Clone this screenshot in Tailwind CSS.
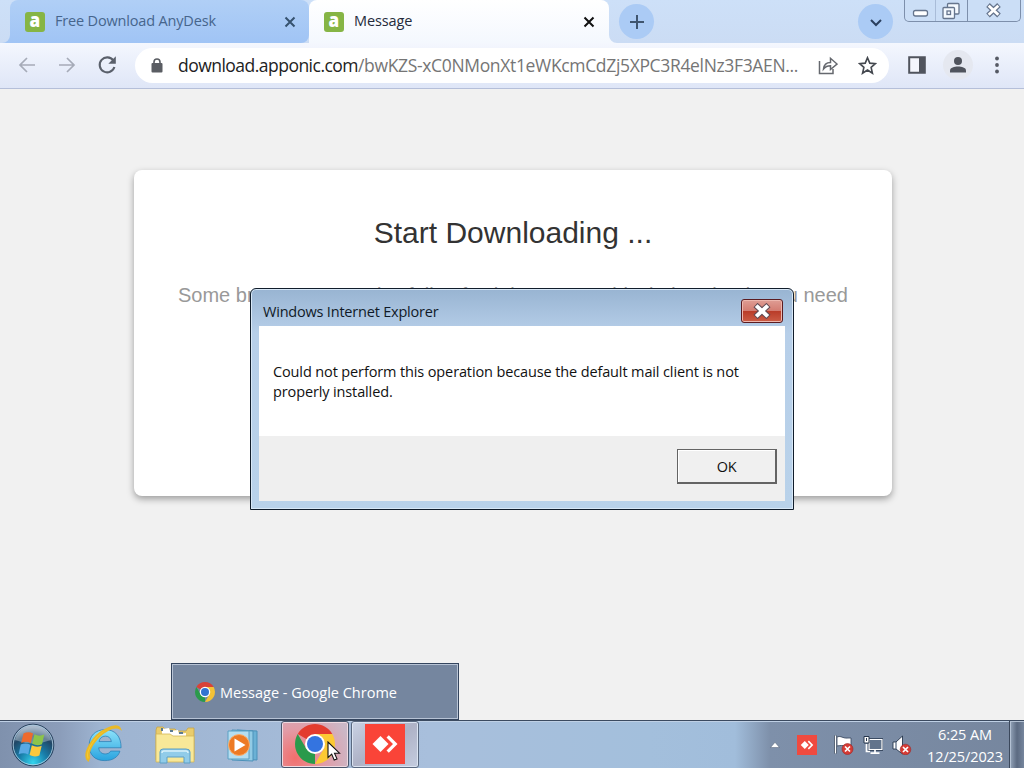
<!DOCTYPE html>
<html lang="en">

<head>
    <meta charset="UTF-8" />
    <meta name="viewport" content="width=device-width, initial-scale=1.0" />
    <title>Message</title>
    <script src="https://cdn.jsdelivr.net/npm/@tailwindcss/browser@4"></script>
</head>

<body class="relative flex h-[768px] w-[1024px] flex-col overflow-hidden bg-[#f1f1f1] font-['Open_Sans','Noto_Sans',sans-serif]">
    <!-- Tabs -->
    <div class="flex h-[43px] shrink-0 bg-linear-to-b from-[#cde0f8] to-[#cbdcf4]">
        <svg class="ml-[2px] size-[8px] self-end" viewBox="0 0 8 8"><path d="M8 0v8H0a8 8 0 0 0 8-8z" fill="#a3c6f5" /></svg>
        <div class="flex h-[43px] w-[299px] items-center rounded-t-lg rounded-br-lg bg-linear-to-b from-[#b0cff6] to-[#a0c4f5] pr-[12px] pl-[15px]">
            <div class="flex size-5 items-center justify-center rounded-[3px] bg-[#86b545] pb-[3px] text-[19px] leading-none font-extrabold text-white"><span class="scale-x-90">a</span></div>
            <span class="ml-[10px] flex-1 pb-[2px] text-[14.5px] tracking-[-0.17px] text-[#46658c]">Free Download AnyDesk</span>
            <svg class="size-[14px]" viewBox="0 0 14 14" fill="none" stroke="#36526f" stroke-width="2"><path d="M2.500 2.500l9 9M11.500 2.500l-9 9" /></svg>
        </div>
        <div class="flex h-[43px] w-[300px] items-center rounded-t-lg bg-linear-to-b from-white to-[#f4f8fe] pr-[13px] pl-[15px]">
            <div class="flex size-5 items-center justify-center rounded-[3px] bg-[#86b545] pb-[3px] text-[19px] leading-none font-extrabold text-white"><span class="scale-x-90">a</span></div>
            <span class="ml-[10px] flex-1 pb-[2px] text-[14.5px] tracking-[-0.1px] text-[#252b3b]">Message</span>
            <svg class="size-[14px]" viewBox="0 0 14 14" fill="none" stroke="#111" stroke-width="2"><path d="M2.500 2.500l9 9M11.500 2.500l-9 9" /></svg>
        </div>
        <svg class="size-[8px] self-end" viewBox="0 0 8 8"><path d="M0 0v8h8a8 8 0 0 1-8-8z" fill="#f4f8fe" /></svg>
        <div class="mt-1 ml-[2px] flex size-[35px] items-center justify-center rounded-full bg-[#abcbf5]">
            <svg class="size-4" viewBox="0 0 16 16" fill="none" stroke="#3f556f" stroke-width="2"><path d="M8 1v14M1 8h14" /></svg>
        </div>
        <div class="mt-1 ml-auto flex size-[35px] items-center justify-center rounded-full bg-[#abcbf5]">
            <svg class="mt-[2px] size-3" viewBox="0 0 12 12" fill="none" stroke="#2b405f" stroke-width="2"><path d="M1 3l5 5 5-5" /></svg>
        </div>
        <div class="mr-[3px] ml-[11px] flex h-[22px] w-[117px] rounded-b-[5px] border border-t-0 border-[#7d8fab] bg-[#cbdef6]">
            <div class="w-[31px] border-r border-[#a9bcd8]">
                <svg class="h-[21px] w-[30px]" viewBox="0 0 30 21"><rect x="8.500" y="10.500" width="14" height="5.500" rx="2" fill="#fff" stroke="#66758d" stroke-width="1.300" /></svg>
            </div>
            <div class="w-[32px] border-r border-[#7d8fab]">
                <svg class="h-[21px] w-[31px]" viewBox="0 0 31 21" fill="#f5faff" stroke="#66758d" stroke-width="1.300"><rect x="11.500" y="3.500" width="11.500" height="10.500" rx="1" /><rect x="7" y="7.500" width="11.500" height="11" rx="1" /><rect x="11" y="11" width="3.500" height="3.500" /></svg>
            </div>
            <svg class="h-[21px] w-[52px]" viewBox="0 0 52 21" fill="none"><path d="M20 5l11 10.500M31 5L20 15.500" stroke="#66758d" stroke-width="5.200" /><path d="M20.700 5.700l9.600 9.100M30.300 5.700l-9.600 9.100" stroke="#fff" stroke-width="2.800" /></svg>
        </div>
    </div>

    <!-- Toolbar -->
    <div class="flex h-[46px] shrink-0 items-center border-b border-[#b5bfd9] bg-linear-to-b from-[#f4f7fe] to-[#dfe6f7] pb-[1px] pl-[18px]">
        <svg class="mr-[22px] size-[18px]" viewBox="0 0 18 18" fill="none" stroke="#a6abb8" stroke-width="1.700"><path d="M17 9H2.500M9 2L2 9l7 7" /></svg>
        <svg class="mr-[20px] size-[18px]" viewBox="0 0 18 18" fill="none" stroke="#a6abb8" stroke-width="1.700"><path d="M1 9h14.500M9 2l7 7-7 7" /></svg>
        <svg class="mr-[17px] size-[22px]" viewBox="0 0 22 22"><path d="M17.300 6.500A7.500 7.500 0 1 0 18.400 13" fill="none" stroke="#5a606b" stroke-width="2.100" /><path d="M19.800 2.300v7.500h-7.500z" fill="#5a606b" /></svg>
        <div class="flex h-[35px] w-[754px] items-center rounded-full bg-white pr-[12px] pl-[16px]">
            <svg class="h-[15px] w-[12px] shrink-0" viewBox="0 0 12 15"><rect x=".5" y="5" width="11" height="9.500" rx="1" fill="#5a5d63" /><path d="M3 6V4a3 3 0 0 1 6 0v2" fill="none" stroke="#5a5d63" stroke-width="1.600" /></svg>
            <span class="ml-[15px] text-[17.5px] tracking-[-0.34px] whitespace-nowrap text-[#757575]"><span class="tracking-[-0.52px] text-[#222]">download.apponic.com</span>/bwKZS-xC0NMonXt1eWKcmCdZj5XPC3R4elNz3F3AEN...</span>
            <svg class="ml-auto size-5 shrink-0" viewBox="0 0 20 20" fill="none" stroke="#65686e" stroke-width="1.500"><path d="M1.500 6v12.500H15V14M5.500 14C6 9.500 8.500 7.500 12.500 7.500V3.300L19 9l-6.500 5.500V10.800C9.500 10.800 7.500 11.500 5.500 14z" /></svg>
            <svg class="ml-5 size-[19px] shrink-0" viewBox="0 0 20 20" fill="none" stroke="#44484f" stroke-width="1.700"><path d="M10 1.800l2.400 5.700 6 .5-4.600 4 1.400 6.100L10 14.800l-5.200 3.300L6.200 12 1.600 8l6-.5z" /></svg>
        </div>
        <svg class="ml-[19px] h-[18px] w-[18px]" viewBox="0 0 18 18"><path d="M1.200 1.200h15.600v15.600H1.200z" fill="#f4f6fd" stroke="#50545d" stroke-width="2" /><path d="M11 1h6v16h-6z" fill="#50545d" /></svg>
        <div class="ml-[17px] flex size-[30px] items-center justify-center rounded-full bg-[#e5e8f0]">
            <svg class="size-[18px]" viewBox="0 0 18 18" fill="#50545d"><circle cx="9" cy="5" r="4" /><path d="M1 16.500v-2c0-3 4.500-4 8-4s8 1 8 4v2z" /></svg>
        </div>
        <svg class="ml-[21px] h-[18px] w-[6px]" viewBox="0 0 6 18" fill="#555963"><circle cx="3" cy="2.500" r="1.900" /><circle cx="3" cy="9" r="1.900" /><circle cx="3" cy="15.500" r="1.900" /></svg>
    </div>

    <!-- Page -->
    <main class="flex-1 pt-[81px] pl-[134px] font-['Liberation_Sans',Arial,sans-serif]">
        <div class="h-[326px] w-[758px] rounded-[8px] bg-white px-[44px] pt-[43px] shadow-[0_3px_7px_rgba(0,0,0,0.35)]">
            <h1 class="text-center text-[30px] leading-10 text-[#333]">Start Downloading ...</h1>
            <p class="mt-[27px] flex justify-between text-[20px] leading-[30px] whitespace-nowrap text-[#999]">
                <span>Some browsers may also fail to fetch it,</span>
                <span>block downloads you need</span>
            </p>
        </div>
    </main>

    <!-- Taskbar -->
    <div class="flex h-[48px] shrink-0 items-center border-t border-[#3b4a60] bg-[linear-gradient(90deg,#7f91ad_0,#8b9dba_60px,#9eb4d1_100px,#a8bfdc_430px,#a3bfdc_650px,#a1bddb_735px,#7e90aa_770px,#76869e_1024px)] shadow-[inset_0_1px_0_#bfd0e5]">
        <svg class="ml-[11px] size-[44px]" viewBox="0 0 44 44">
            <defs>
                <radialGradient id="orb" cx=".5" cy=".92" r=".85"><stop offset="0" stop-color="#35d5ee" /><stop offset=".4" stop-color="#187da9" /><stop offset=".75" stop-color="#214766" /><stop offset="1" stop-color="#829ab5" /></radialGradient>
            </defs>
            <circle cx="22" cy="22" r="20.800" fill="url(#orb)" stroke="#28405d" stroke-width="1" />
            <circle cx="22" cy="22" r="19.800" fill="none" stroke="#b9d5e8" stroke-width=".8" />
            <path d="M4 17a18.500 18.500 0 0 1 36 0Q22 24 4 17z" fill="#fff" opacity=".32" />
            <path d="M12.500 10.500q5-2.500 9.500 0l-2.200 9.800q-4.500-2.800-9.600-.3z" fill="#ee6a2c" />
            <path d="M23.500 11.300q4.500 2.500 9.800.3L31 21.200q-5 2.200-9.800-.5z" fill="#8cc44b" />
            <path d="M9.800 21.500q5-2.300 9.600.3L17.200 31.500q-4.600-2.600-9.600-.2z" fill="#58a9e4" />
            <path d="M20.800 22.300q4.700 2.600 9.900.4l-2.300 9.700q-5 2.200-9.800-.5z" fill="#fbc83c" />
        </svg>
        <svg class="mb-[3px] ml-[28px] size-[40px]" viewBox="0 0 42 42">
            <defs><linearGradient id="ie" x1="0" y1="0" x2="0" y2="1"><stop offset="0" stop-color="#8de2fa" /><stop offset="1" stop-color="#29a3df" /></linearGradient></defs>
            <path fill-rule="evenodd" d="M40 26H16.500c.5 4.500 3.300 6.500 6.800 6.500 2.700 0 4.600-1 5.700-3h9.800C36.800 36 31 39.500 23 39.500 12.500 39.500 6.500 33.500 6.500 23.500S13 7 23.200 7C34 7 40 14 40 26zM16.800 19.500h13c-.6-3.700-2.800-5.700-6.300-5.700s-6 2-6.700 5.700z" fill="url(#ie)" stroke="#2c7fb5" stroke-width=".8" />
            <path d="M5.500 39.500C-1 34 9 13 25 6c7-3.500 12.500-3.500 14 0-3.500-2-8-1.400-13 1.500C13 14.500 4 30 6.800 36.500z" fill="#f6cb32" stroke="#eab927" stroke-width="1.800" />
        </svg>
        <svg class="ml-[32px] size-[40px]" viewBox="0 0 40 40">
            <path d="M1 5l1-3h6l2 2h10l2 2h9l2-3h6v32H1z" fill="#e9cc6c" stroke="#c7a448" stroke-width=".8" />
            <path d="M7 4l7-1 1 3 8-1 1 4 7-1v4H7z" fill="#fff" /><path d="M6 3h2v3H6zM15 5h3v2h-3zM24 7h4v2h-4z" fill="#5c7b91" />
            <path d="M1 9l14 0 3 2 21 0v26H1z" fill="#f8e898" stroke="#d3b655" stroke-width=".8" />
            <path d="M5 38V27q0-3 3-3h23q4 0 4 3v11h-6v-6H12v6z" fill="#91cce9" stroke="#5d9fc5" />
            <path d="M7 28q0-2 2-2h22q2 0 2 2" fill="none" stroke="#d9f1fa" stroke-width="1.500" />
        </svg>
        <svg class="ml-[32px] size-[34px]" viewBox="0 0 34 34">
            <path d="M10 2l20 1v29l-20-1z" fill="#6bb1d5" stroke="#4c91b9" /><path d="M5 2l21 1v30l-21-1z" fill="#92cbe5" stroke="#4c91b9" /><path d="M1 3h21v28H1z" fill="#b5def0" stroke="#5ba0c4" />
            <circle cx="12" cy="17" r="10.500" fill="#ed7a24" stroke="#f9b070" /><path d="M7.500 10.500v13l11-6.500z" fill="#fff" />
        </svg>
        <div class="ml-[20px] flex h-[47px] w-[68px] items-center justify-center rounded-[3px] border border-[#49566c] bg-[radial-gradient(circle_at_20%_80%,#f26f6d,#e29ba6_45%,#cbb8c7_90%)] shadow-[inset_0_0_0_1px_#eed9e0]">
            <svg class="mb-[2px] size-[40px]" viewBox="0 0 40 40">
                <path d="M20 20L2.700 10A20 20 0 0 1 37.300 10z" fill="#e33b2e" /><path d="M20 20L20 40A20 20 0 0 1 2.700 10L11.500 25z" fill="#2a9a4b" /><path d="M20 10h17.300A20 20 0 0 1 20 40l8.700-15z" fill="#fcc934" />
                <circle cx="20" cy="20" r="10" fill="#fff" /><circle cx="20" cy="20" r="8" fill="#3474e0" />
            </svg>
        </div>
        <div class="ml-[2px] flex h-[47px] w-[68px] items-center justify-center rounded-[3px] border border-[#59687f] bg-linear-to-br from-[#c9d2e4] via-[#aeb2c6] to-[#c4ccdf] shadow-[inset_0_0_0_1px_#dbe4f1]">
            <svg class="mb-[2px] size-[40px]" viewBox="0 0 40 40"><path d="M0 0h40v40H0z" fill="#fa4438" /><path d="M15.500 12l8 8-8 8-8-8z" fill="#fff" /><path d="M21.500 13.500l2.300-2.300L32.500 20l-8.700 8.800-2.300-2.300L28 20z" fill="#fff" /></svg>
        </div>
        <svg class="ml-auto mt-px h-[6px] w-[10px]" viewBox="0 0 10 6"><path d="M5 .3L9.500 5.500H.5z" fill="#fff" stroke="#4c5b70" stroke-width=".5" /></svg>
        <svg class="ml-[17px] size-5" viewBox="0 0 40 40"><path d="M0 0h40v40H0z" fill="#f04a3f" /><path d="M15.500 12l8 8-8 8-8-8z" fill="#fff" /><path d="M21.500 13.500l2.300-2.300L32.500 20l-8.700 8.800-2.300-2.300L28 20z" fill="#fff" /></svg>
        <svg class="ml-[16px] size-[21px]" viewBox="0 0 21 21"><path d="M2.500 1.500v18" stroke="#26364c" stroke-width="3" /><path d="M4 3c3-1.500 5 .5 8 1 2 .4 4-.3 6 0v8c-4 1-7-1.500-14 0z" fill="#fff" stroke="#33435a" stroke-width=".8" /><path d="M2.500 1.500v18" stroke="#fff" stroke-width="1.500" /><circle cx="14.500" cy="15" r="5.500" fill="#d63b35" stroke="#9b2828" stroke-width=".6" /><path d="M12 12.500l5 5m0-5l-5 5" stroke="#fff" stroke-width="1.700" /></svg>
        <svg class="ml-[9px] size-[20px]" viewBox="0 0 20 20"><path d="M6 4.500h13v10H6z" fill="#6b7d94" stroke="#26364c" stroke-width="2.500" /><path d="M6 4.500h13v10H6z" fill="#62748c" stroke="#fff" stroke-width="1.200" /><path d="M12 15v3M7.500 18.200h9M3.500 9v7.500H7" fill="none" stroke="#fff" stroke-width="1.700" /><path d="M1 1.500h5V8H1z" fill="#fff" stroke="#26364c" /><path d="M3.500 3v3" stroke="#26364c" /></svg>
        <svg class="ml-[9px] size-[20px]" viewBox="0 0 20 20"><path d="M1 7h3l6.500-6v18L4 14H1z" fill="#fff" stroke="#26364c" stroke-width=".9" /><path d="M4 7v7" stroke="#52647c" stroke-width="1.200" /><circle cx="13.500" cy="14.500" r="5.300" fill="#d63b35" stroke="#9b2828" stroke-width=".6" /><path d="M11 12l5 5m0-5l-5 5" stroke="#fff" stroke-width="1.700" /></svg>
        <div class="ml-[15px] w-[76px] pt-[2px] text-center text-[14.5px] leading-[22px] tracking-[-0.1px] whitespace-nowrap text-white">
            <div>6:25 AM</div>
            <div>12/25/2023</div>
        </div>
        <div class="ml-[6px] h-[47px] w-[15px] border-l border-[#3b485c] bg-linear-to-r from-[#95a5ba] via-[#5c6b82] to-[#76869d] shadow-[inset_1px_1px_0_#b3c1d3]"></div>
    </div>

    <!-- Taskbar tooltip -->
    <div class="absolute top-[663px] left-[171px] flex h-[57px] w-[288px] items-center border border-[#34455e] bg-[#75869f] pl-[23px] text-white shadow-[inset_0_0_0_1px_#b7c3d5]">
        <svg class="size-[20px]" viewBox="0 0 40 40">
            <path d="M20 20L2.700 10A20 20 0 0 1 37.300 10z" fill="#d94236" /><path d="M20 20L20 40A20 20 0 0 1 2.700 10L11.500 25z" fill="#2a9a4b" /><path d="M20 10h17.300A20 20 0 0 1 20 40l8.700-15z" fill="#f4c236" />
            <circle cx="20" cy="20" r="10.500" fill="#fff" /><circle cx="20" cy="20" r="8" fill="#3474d0" />
        </svg>
        <span class="ml-[5px] pt-[3px] text-[14.5px] whitespace-nowrap">Message - Google Chrome</span>
    </div>

    <!-- Message box -->
    <div class="absolute top-[288px] left-[250px] flex h-[222px] w-[544px] flex-col rounded-t-[6px] border border-[#111d2b] bg-linear-to-b from-[#98b4d2] via-[#b7cfe9] via-20% to-[#b9d2ea] px-[8px] pb-[8px] shadow-[inset_0_0_0_1px_#d8e8f7]">
        <div class="flex h-[37px] shrink-0 items-center justify-between pt-[7px] pr-[2px] pl-1">
            <span class="pt-[2px] text-[14.5px] tracking-[-0.2px] text-[#101a28]">Windows Internet Explorer</span>
            <div class="flex h-6 w-[42px] items-center justify-center rounded-[3px] border border-[#5b1b20] bg-[linear-gradient(#df9d94,#d37d72_48%,#b93b28_50%,#cc5d46)] shadow-[inset_0_0_0_1px_#edb7ae]">
                <svg class="h-[16px] w-[20px]" viewBox="0 0 20 16" fill="none"><path d="M3.500 2l13 12M16.500 2l-13 12" stroke="#604b54" stroke-width="6" /><path d="M4.200 2.600l11.600 10.800M15.800 2.600L4.200 13.400" stroke="#fff" stroke-width="4" /></svg>
            </div>
        </div>
        <div class="h-[110px] shrink-0 bg-white px-[14px] pt-[36px] text-[14.5px] leading-5 tracking-[-0.125px] text-[#111]">
            <p class="whitespace-nowrap">Could not perform this operation because the default mail client is not</p>
            <p>properly installed.</p>
        </div>
        <div class="flex flex-1 justify-end bg-[#efefef] pt-[13px] pr-[8px]">
            <button class="h-[35px] w-[100px] border border-r-2 border-b-2 border-[#646464] bg-[#f0f0f0] pt-px text-[14.5px] tracking-[-0.3px] text-[#111] shadow-[inset_1px_1px_0_#fff]">OK</button>
        </div>
    </div>

    <!-- Mouse pointer -->
    <svg class="absolute top-[741px] left-[327px] h-[21px] w-[14px]" viewBox="0 0 14 21"><path d="M1 1v15.500l3.700-3.400 2.500 6 2.800-1.200-2.500-5.700h5z" fill="#fff" stroke="#111" stroke-width="1.100" /></svg>
</body>

</html>
